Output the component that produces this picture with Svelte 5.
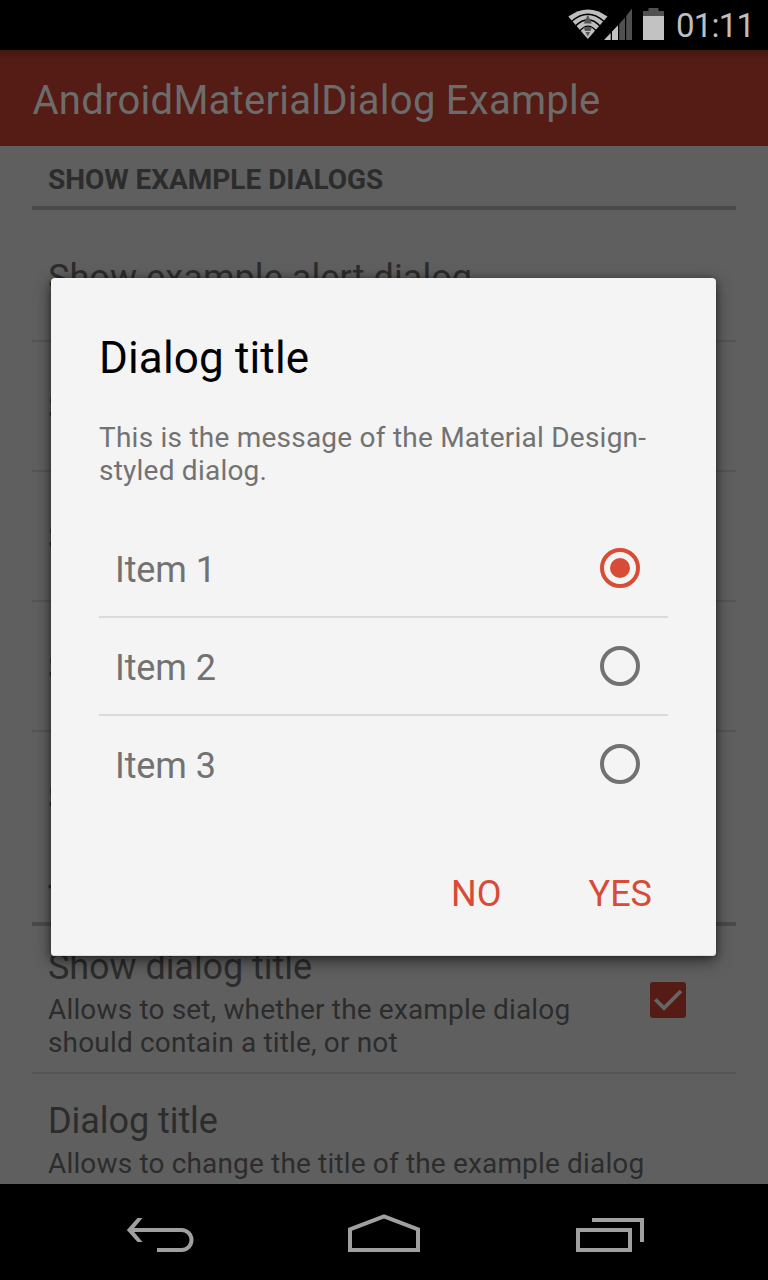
<script>
  const examples = [
    'Show example alert dialog',
    'Show example list dialog',
    'Show example single choice dialog',
    'Show example multiple choice dialog',
    'Show example custom dialog'
  ];
  const items = ['Item 1', 'Item 2', 'Item 3'];
  let selected = $state(0);
</script>

<div class="screen">
  <div class="status">
    <svg class="wifi" width="40" height="32" viewBox="568 8 40 32">
      <path d="M568.300 16.600Q588 2.400 607.500 16.600L587.800 39Z" fill="#bebebe" />
      <g fill="none" stroke="#000" stroke-width="1.400">
        <path d="M571.500 21.500Q588 7 604 21.500" />
        <path d="M575.500 26Q588 13.500 600 26" />
        <path d="M580 30.800Q588 21.500 596 30.800" />
      </g>
      <path d="M587.800 14.500l4 9h-8zM583.500 27h8.500l-1.500 4h-5.500zM585.500 32h4.500l-2.200 4.500z" fill="#555" />
    </svg>
    <svg class="signal" width="28" height="32" viewBox="604 8 28 32">
      <path d="M604 40L610.700 33V40Z M612 31.500L618 25.300V40H612Z" fill="#c2c2c2" />
      <path d="M619.200 24L625 17.500V40H619.200Z M626.200 16L632 8.500V40H626.200Z" fill="#505050" />
    </svg>
    <svg class="battery" width="21" height="32" viewBox="0 0 21 32">
      <path d="M0 3H5.500V0H15.500V3H21V8H0Z" fill="#505050" />
      <path d="M0 8H21V32H0Z" fill="#c2c2c2" />
    </svg>
    <span class="time">01:11</span>
  </div>

  <header class="appbar">AndroidMaterialDialog Example</header>

  <main>
    <h2>SHOW EXAMPLE DIALOGS</h2>
    <ul class="examples">
      {#each examples as label}
        <li>{label}</li>
      {/each}
    </ul>
    <h2>THE EXAMPLE DIALOG</h2>
    <div class="pref first">
      <div class="copy">
        <div class="name">Show dialog title</div>
        <div class="summary">Allows to set, whether the example dialog<br />should contain a title, or not</div>
      </div>
      <svg class="check" width="36" height="36" viewBox="0 0 36 36">
        <rect width="36" height="36" rx="3" fill="#551c15" />
        <path d="M5.300 17.500L14 26L31 9" fill="none" stroke="#666" stroke-width="3.800" />
      </svg>
    </div>
    <div class="pref second">
      <div class="copy">
        <div class="name">Dialog title</div>
        <div class="summary">Allows to change the title of the example dialog</div>
      </div>
    </div>
  </main>

  <nav>
    <svg width="68" height="36" viewBox="126 1216 68 36">
      <path d="M129 1230H181.500A9.700 9.700 0 0 1 181.500 1250H157" fill="none" stroke="#a0a0a0" stroke-width="4" />
      <path d="M137.500 1218H142.500L132.500 1230L142.500 1242H137.500L126.800 1230Z" fill="#a0a0a0" />
    </svg>
    <svg width="72" height="38" viewBox="0 0 72 38">
      <path d="M2 36V15.300L36 2.300L70 15.300V36Z" fill="none" stroke="#a0a0a0" stroke-width="4" />
    </svg>
    <svg width="68" height="34" viewBox="0 0 68 34">
      <path d="M2 12H54V32H2ZM16 2H66V24" fill="none" stroke="#a0a0a0" stroke-width="4" />
    </svg>
  </nav>

  <div class="dialog" role="dialog" aria-label="Dialog title">
    <h1>Dialog title</h1>
    <p>This is the message of the Material Design-<br />styled dialog.</p>
    <div class="choices">
      {#each items as item, i}
        <button class="choice" onclick={() => (selected = i)}>
          <span>{item}</span>
          <span class="radio" class:on={selected === i}></span>
        </button>
      {/each}
    </div>
    <div class="actions">
      <button class="no">NO</button>
      <button class="yes">YES</button>
    </div>
  </div>
</div>

<style>
  :global(body) { margin: 0; background: #000; }
  .screen {
    position: relative;
    display: flex;
    flex-direction: column;
    width: 768px;
    height: 1280px;
    overflow: hidden;
    background: #5f5f5f;
    font-family: Roboto, "Noto Sans", sans-serif;
    color: #2c2c2c;
  }
  svg { display: block; flex: none; }
  .status {
    display: flex;
    align-items: flex-start;
    box-sizing: border-box;
    height: 50px;
    flex: none;
    padding: 8px 0 0 568px;
    background: #000;
  }
  .signal { margin-left: -4px; }
  .battery { margin-left: 11px; }
  .time {
    margin-left: 12px;
    font-size: 33px;
    line-height: 36px;
    letter-spacing: -0.8px;
    color: #bebebe;
    white-space: nowrap;
  }
  .appbar {
    box-sizing: border-box;
    height: 96px;
    flex: none;
    padding: 5px 0 0 32.5px;
    background: linear-gradient(#431711, #551c15 10px);
    color: #6c6c6c;
    font-size: 40px;
    line-height: 91px;
    letter-spacing: 0.27px;
    white-space: nowrap;
  }
  main {
    flex: 1;
    min-height: 0;
    overflow: hidden;
    padding: 0 32px;
  }
  h2 {
    box-sizing: border-box;
    height: 64px;
    margin: 0;
    padding: 7px 16px 0;
    border-bottom: 4px solid #4a4a4a;
    font-size: 28px;
    line-height: 53px;
    font-weight: 700;
    letter-spacing: -0.03px;
  }
  .examples { list-style: none; margin: 2px 0 0; padding: 0; }
  .examples li {
    box-sizing: border-box;
    height: 130px;
    padding: 4px 16px 0;
    border-bottom: 2px solid #555;
    font-size: 36px;
    line-height: 125px;
    letter-spacing: 0.08px;
    white-space: nowrap;
  }
  .examples li:last-child { border-color: transparent; }
  .pref {
    display: flex;
    justify-content: space-between;
    align-items: center;
    box-sizing: border-box;
    padding: 20px 50px 13px 16px;
    border-bottom: 2px solid #555;
  }
  .second { padding-top: 26px; }
  .copy { white-space: nowrap; }
  .name { font-size: 36px; line-height: 42px; letter-spacing: -0.06px; }
  .summary { margin-top: 5px; font-size: 28px; line-height: 33px; letter-spacing: 0.16px; }
  .check { margin-top: -5px; }
  nav {
    display: grid;
    grid-template-columns: 68px 72px 68px;
    column-gap: 154px;
    align-items: end;
    box-sizing: border-box;
    height: 96px;
    flex: none;
    padding: 0 0 28px 126px;
    background: #000;
  }
  nav svg:last-child { margin-left: 2px; }

  .dialog {
    position: absolute;
    left: 51px;
    top: 278px;
    width: 665px;
    height: 678px;
    box-sizing: border-box;
    padding: 54px 48px 0;
    border-radius: 4px;
    background: #f4f4f4;
    box-shadow: 0 5px 16px rgba(0, 0, 0, 0.5), 0 1px 6px rgba(0, 0, 0, 0.35), inset 0 -1px 0 #dcdcdc;
    color: #727272;
  }
  h1 {
    margin: 0;
    color: #000;
    font-size: 44px;
    line-height: 52px;
    font-weight: 400;
    letter-spacing: 0.15px;
  }
  p {
    margin: 37px 0 0;
    font-size: 28px;
    line-height: 33px;
    letter-spacing: 0.23px;
    white-space: nowrap;
  }
  .choices { margin-top: 33px; }
  button {
    display: block;
    margin: 0;
    padding: 0;
    border: 0;
    background: none;
    font: inherit;
    color: inherit;
    text-align: left;
  }
  .choice {
    display: flex;
    justify-content: space-between;
    align-items: center;
    box-sizing: border-box;
    width: 569px;
    height: 98px;
    padding: 0 28px 0 16px;
    border-bottom: 2px solid #dadada;
    font-size: 36px;
    line-height: 42px;
    letter-spacing: -0.1px;
  }
  .choice:last-child { border-color: transparent; }
  .choice span:first-child { padding-top: 3px; }
  .radio {
    display: grid;
    place-items: center;
    box-sizing: border-box;
    width: 40px;
    height: 40px;
    border: 4px solid #727272;
    border-radius: 50%;
  }
  .radio.on { border-color: #d84b37; }
  .radio.on::after {
    content: "";
    width: 20px;
    height: 20px;
    border-radius: 50%;
    background: #d84b37;
  }
  .actions {
    display: flex;
    justify-content: flex-end;
    gap: 87px;
    margin-top: 59px;
    padding-right: 16px;
    font-size: 36px;
    line-height: 42px;
    color: #d84b37;
  }
</style>
